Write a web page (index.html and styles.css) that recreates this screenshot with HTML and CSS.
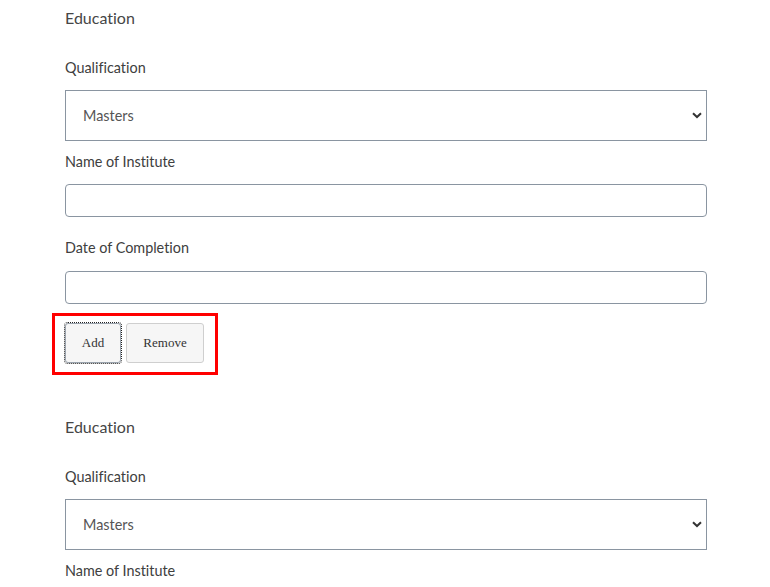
FILE: index.html
```html
<!DOCTYPE html>
<html>
<head>
<meta charset="utf-8">
<link rel="stylesheet" href="styles.css">
</head>
<body>
<div class="page">
  <section class="edu">
    <h3 class="title">Education</h3>
    <label class="lbl lbl-first">Qualification</label>
    <div class="select">
      <span>Masters</span>
      <svg class="chev" width="10" height="7" viewBox="0 0 10 7"><path d="M1 1.2 L5 5 L9 1.2" fill="none" stroke="#333" stroke-width="2"/></svg>
    </div>
    <label class="lbl lbl-after-select">Name of Institute</label>
    <input class="field" type="text">
    <label class="lbl lbl-after-input">Date of Completion</label>
    <input class="field" type="text">
    <div class="btnbox">
      <button class="btn btn-add">Add</button>
      <button class="btn btn-remove">Remove</button>
    </div>
  </section>
  <section class="edu edu-2">
    <h3 class="title">Education</h3>
    <label class="lbl lbl-first">Qualification</label>
    <div class="select">
      <span>Masters</span>
      <svg class="chev" width="10" height="7" viewBox="0 0 10 7"><path d="M1 1.2 L5 5 L9 1.2" fill="none" stroke="#333" stroke-width="2"/></svg>
    </div>
    <label class="lbl lbl-after-select">Name of Institute</label>
  </section>
</div>
</body>
</html>
```
FILE: styles.css
```css
html, body {
  margin: 0;
  padding: 0;
  background: #fff;
}
body {
  font-family: "Lato", "Nunito", "Noto Sans", sans-serif;
  font-variant-ligatures: none;
  color: #4a4a4a;
  overflow: hidden;
}
.page {
  padding: 8px 0 0 65px;
  width: 642px;
}
.edu {
  display: flex;
  flex-direction: column;
}
.edu-2 {
  margin-top: 42px;
}
.title {
  margin: 0;
  font-size: 16px;
  font-weight: 400;
  line-height: 20px;
  color: #464646;
}
.lbl {
  display: block;
  font-size: 14.4px;
  line-height: 20px;
  color: #404040;
}
.lbl-first {
  margin-top: 30px;
  margin-bottom: 12px;
}
.lbl-after-select {
  margin-top: 11px;
  margin-bottom: 12px;
}
.lbl-after-input {
  margin-top: 21px;
  margin-bottom: 13px;
}
.select {
  box-sizing: border-box;
  height: 51px;
  border: 1px solid #8a95a1;
  display: flex;
  align-items: center;
  justify-content: space-between;
  padding: 0 4px 0 17px;
  font-size: 14.4px;
  color: #555;
}
.chev {
  display: block;
}
.field {
  box-sizing: border-box;
  display: block;
  width: 642px;
  height: 33px;
  margin: 0;
  border: 1px solid #8a95a1;
  border-radius: 4px;
  background: #fff;
}
.btnbox {
  display: inline-flex;
  align-self: flex-start;
  gap: 5px;
  margin: 9px 0 0 -13px;
  padding: 7px 11px 9px 10px;
  border: 3px solid #f00;
}
.btn {
  box-sizing: border-box;
  height: 40px;
  margin: 0;
  font-family: "Liberation Serif", serif;
  font-size: 13px;
  color: #333;
  background: #f6f6f6;
  border: 1px solid #cfcfcf;
  border-radius: 3px;
  padding: 0;
}
.btn-add {
  width: 56px;
  border-color: #9aa3ad;
  outline: 1px dotted #222;
  outline-offset: 0;
}
.btn-remove {
  width: 78px;
}
```
